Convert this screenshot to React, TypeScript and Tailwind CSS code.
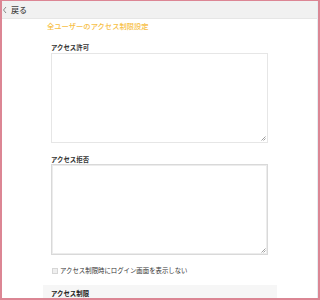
import React from "react";

export default function App() {
  const font = { fontFamily: '"Noto Sans CJK JP", "Noto Sans", sans-serif' };
  return (
    <div
      className="w-[320px] h-[300px] overflow-hidden bg-white border-l-2 border-t border-r-2 border-b-2 border-[#dc8694] flex flex-col"
      style={font}
    >
      <div className="flex-1 flex flex-col border-r border-[#e6edf1] overflow-hidden">
        <div className="h-[18px] shrink-0 bg-[#f1f1f1] border-b border-[#e6e6e6] flex items-center">
          <svg width="6" height="8" viewBox="0 0 6 8" className="ml-[0px]">
            <path d="M4 1 L1.5 4 L4 7" fill="none" stroke="#8a8a8a" strokeWidth="1" />
          </svg>
          <span className="ml-[3px] text-[8px] leading-none text-[#444] font-medium">戻る</span>
        </div>
        <div className="pl-[45px] mt-[2px] text-[7.3px] leading-[10px] text-[#f7c046] font-medium">
          全ユーザーのアクセス制限設定
        </div>
        <div className="pl-[49px] flex flex-col">
          <div className="mt-[13px] text-[6.4px] leading-[8px] font-bold text-[#333]">アクセス許可</div>
          <div className="mt-[1px] w-[217px] h-[90px] border border-[#e6e6e6] relative">
            <svg width="5" height="5" viewBox="0 0 5 5" className="absolute right-[1px] bottom-[1px]">
              <path d="M4.5 0.5 L0.5 4.5 M4.5 2.5 L2.5 4.5" stroke="#888" strokeWidth="0.8" />
            </svg>
          </div>
          <div className="mt-[13px] text-[6.4px] leading-[8px] font-bold text-[#333]">アクセス拒否</div>
          <div className="mt-[0px] w-[217px] h-[91px] border border-[#d9d9d9] shadow-[inset_0_0_0_1px_#ececec] relative">
            <svg width="5" height="5" viewBox="0 0 5 5" className="absolute right-[1px] bottom-[1px]">
              <path d="M4.5 0.5 L0.5 4.5 M4.5 2.5 L2.5 4.5" stroke="#888" strokeWidth="0.8" />
            </svg>
          </div>
          <div className="mt-[12px] flex items-center">
            <div className="ml-[1px] w-[6px] h-[6px] border border-[#d6d6d6] bg-[#efefef]" />
            <span className="ml-[2px] text-[6.4px] leading-[8px] text-[#333]">
              アクセス制限時にログイン画面を表示しない
            </span>
          </div>
        </div>
        <div className="ml-[41px] mt-[10px] w-[234px] flex-1 bg-[#f6f6f6] pl-[8px] pt-[5px]">
          <div className="text-[6.4px] leading-[8px] font-bold text-[#222]">アクセス制限</div>
        </div>
      </div>
    </div>
  );
}
